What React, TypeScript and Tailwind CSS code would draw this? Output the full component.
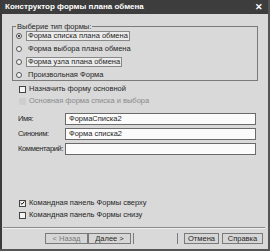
import React from "react";

const font = { fontFamily: '"Liberation Sans", Arial, sans-serif' };

function Radio({ checked, label, focus }: { checked?: boolean; label: string; focus?: boolean }) {
  return (
    <div className="flex h-[13px] items-center pl-[3px]">
      <span className="flex h-[6px] w-[6px] items-center justify-center rounded-full border border-[#555] bg-[#f2f2f2]">
        {checked && <span className="h-[2px] w-[2px] rounded-full bg-[#111]" />}
      </span>
      <span
        className={`ml-[4px] px-[1px] leading-[8px] ${focus ? "border border-[#888] bg-[#ececec]" : "border border-transparent"}`}
      >
        {label}
      </span>
    </div>
  );
}

function Check({ checked, label, disabled }: { checked?: boolean; label: string; disabled?: boolean }) {
  return (
    <div className={`flex h-[12px] items-center pl-[17px] ${disabled ? "text-[#8a8a8a]" : ""}`}>
      <span
        className={`flex h-[7px] w-[7px] items-center justify-center border ${disabled ? "border-[#cfcfcf] bg-[#cdcdcd]" : "border-[#444] bg-[#f4f4f4]"}`}
      >
        {checked && (
          <svg width="6" height="6" viewBox="0 0 6 6">
            <path d="M0.8 3 L2.4 4.6 L5.2 1.2" fill="none" stroke="#111" strokeWidth="1.2" />
          </svg>
        )}
      </span>
      <span className="ml-[3px]">{label}</span>
    </div>
  );
}

function Field({ label, value }: { label: string; value: string }) {
  return (
    <div className="flex h-[12px] items-center pl-[16px] pr-[12px]">
      <span className="w-[47px] overflow-hidden whitespace-nowrap tracking-[-0.35px]">{label}</span>
      <div className="flex h-[12px] flex-1 items-center border border-[#6a6a6a] bg-[#fbfbfb] pl-[3px]">{value}</div>
    </div>
  );
}

function Btn({ label, disabled }: { label: string; disabled?: boolean }) {
  return (
    <div
      className={`flex h-[11px] items-center justify-center border border-[#7a7a7a] bg-[#d6d6d6] ${disabled ? "text-[#7a7a7a]" : ""}`}
    >
      {label}
    </div>
  );
}

export default function App() {
  return (
    <div className="h-[251px] w-[270px] overflow-hidden bg-[#555]" style={font}>
      <div className="flex h-[249px] w-[268px] flex-col border-l-2 border-[#3a3a3a] bg-[#d9d9d9] text-[7.5px] text-[#262626]">
        <div className="flex h-[14px] items-center justify-between bg-[#3d3d3d] pl-[3px] pr-[5px] text-[8px] font-bold text-white">
          <span>Конструктор формы плана обмена</span>
          <span className="text-[9px] leading-none">✕</span>
        </div>

        <div className="relative ml-[10px] mt-[12px] h-[55px] w-[246px] border border-[#7a7a7a] pt-[2px]">
          <span className="absolute left-[3px] top-[-5px] bg-[#d9d9d9] px-[1px] leading-[9px]">Выберие тип формы:</span>
          <Radio checked focus label="Форма списка плана обмена" />
          <Radio label="Форма выбора плана обмена" />
          <Radio focus label="Форма узла плана обмена" />
          <Radio label="Произвольная Форма" />
        </div>

        <div className="mt-[2px]">
          <Check label="Назначить форму основной" />
          <Check disabled label="Основная форма списка и выбора" />
        </div>

        <div className="mt-[6px] flex flex-col gap-[3px]">
          <Field label="Имя:" value="ФормаСписка2" />
          <Field label="Синоним:" value="Форма списка2" />
          <Field label="Комментарий:" value="" />
        </div>

        <div className="mt-[42px]">
          <Check checked label="Командная панель Формы сверху" />
          <Check label="Командная панель Формы снизу" />
        </div>

        <div className="ml-[1px] mr-[3px] mt-[6px] border-t border-b border-t-[#8a8a8a] border-b-[#f0f0f0]" />

        <div className="mt-[4px] flex pl-[43px] pr-[5px]">
          <div className="w-[43px]">
            <Btn disabled label="< Назад" />
          </div>
          <div className="w-[43px]">
            <Btn label="Далее >" />
          </div>
          <div className="ml-[2px] w-[45px]">
            <div className="h-[11px] border-l border-r border-[#7a7a7a]" />
          </div>
          <div className="ml-[6px] w-[35px]">
            <Btn label="Отмена" />
          </div>
          <div className="ml-[3px] w-[41px]">
            <Btn label="Справка" />
          </div>
        </div>
      </div>
    </div>
  );
}
